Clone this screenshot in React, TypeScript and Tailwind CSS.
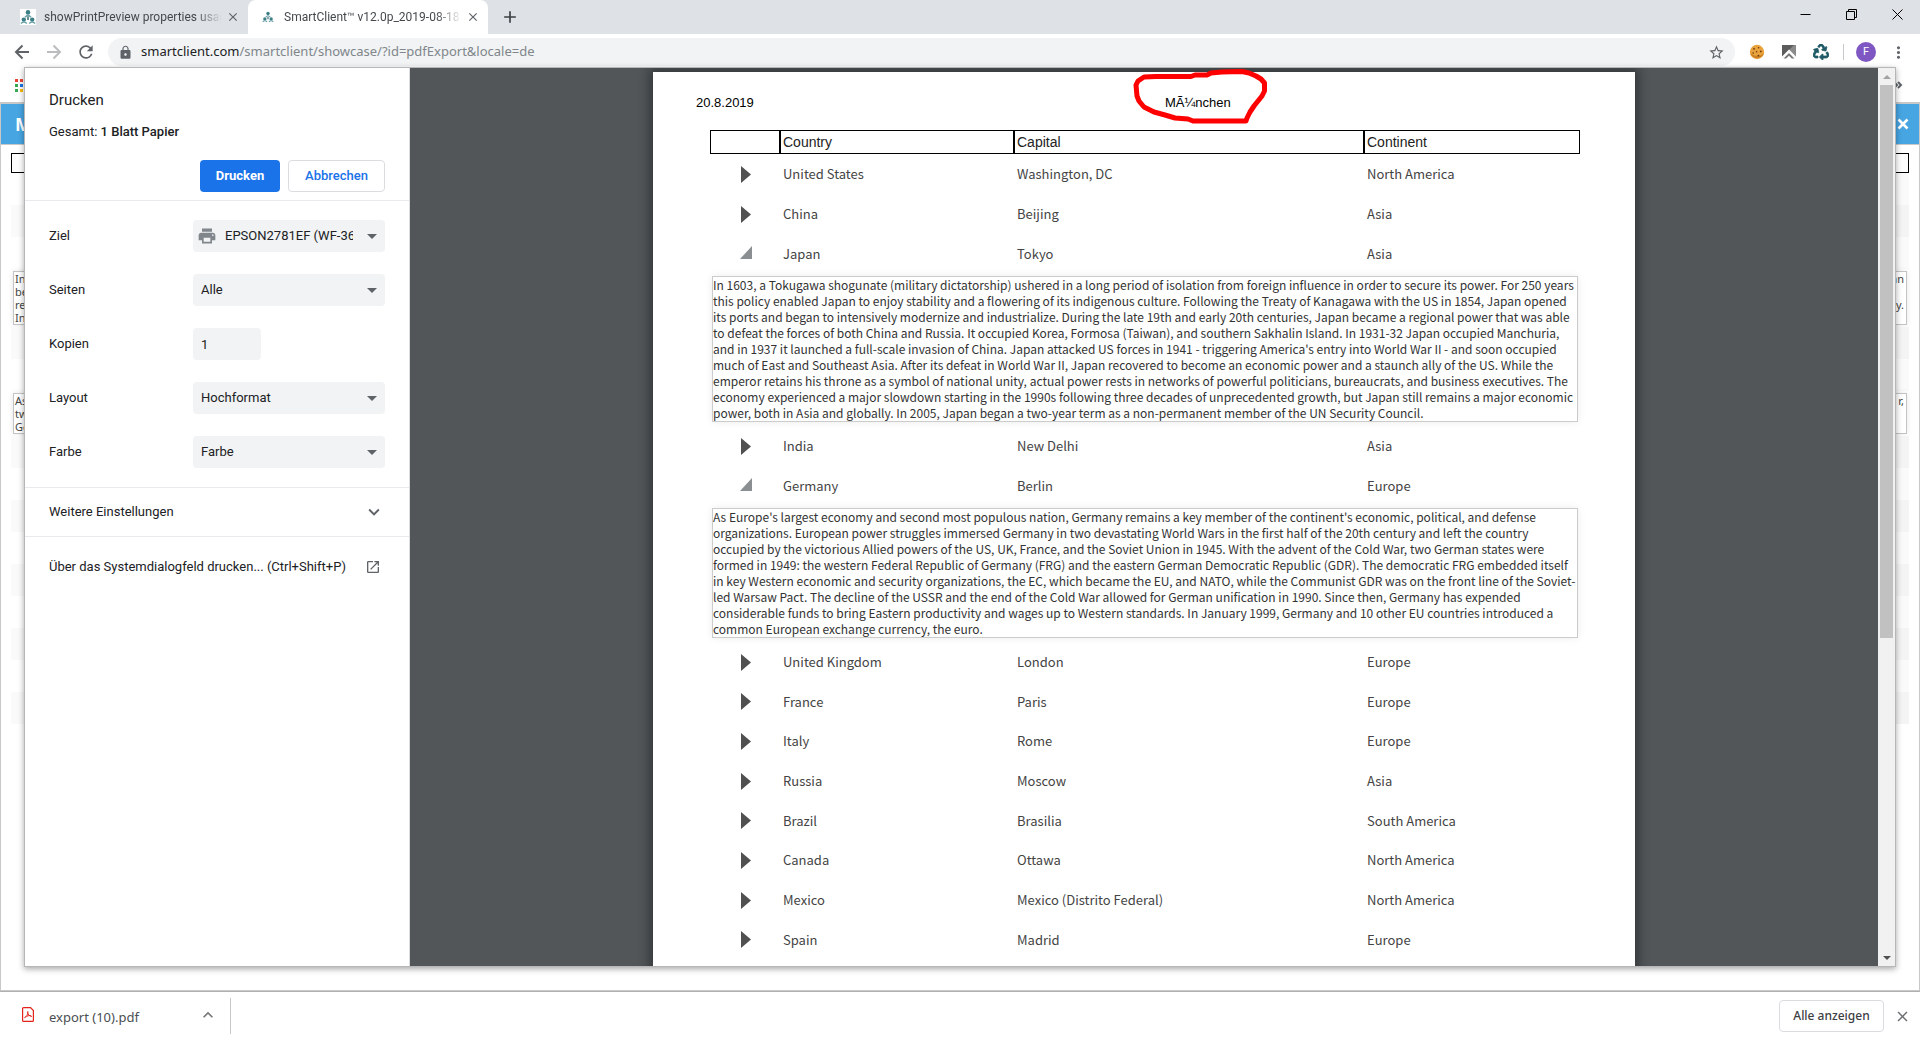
import { useState, type ReactNode } from 'react'
import {
  MdAdd,
  MdClose,
  MdExpandLess,
  MdExpandMore,
  MdLock,
  MdMoreVert,
  MdOpenInNew,
  MdPrint,
  MdRefresh,
  MdStarBorder,
} from 'react-icons/md'
import { FaRecycle } from 'react-icons/fa'

const uiFont = "font-['Noto_Sans','Open_Sans',sans-serif]"
const headFont = "font-['Liberation_Sans',Arial,sans-serif]"

type Country = {
  name: string
  capital: string
  continent: string
  detail?: string
}

const countries: Country[] = [
  { name: 'United States', capital: 'Washington, DC', continent: 'North America' },
  { name: 'China', capital: 'Beijing', continent: 'Asia' },
  {
    name: 'Japan',
    capital: 'Tokyo',
    continent: 'Asia',
    detail: `In 1603, a Tokugawa shogunate (military dictatorship) ushered in a long period of isolation from foreign influence in order to secure its power. For 250 years
this policy enabled Japan to enjoy stability and a flowering of its indigenous culture. Following the Treaty of Kanagawa with the US in 1854, Japan opened
its ports and began to intensively modernize and industrialize. During the late 19th and early 20th centuries, Japan became a regional power that was able
to defeat the forces of both China and Russia. It occupied Korea, Formosa (Taiwan), and southern Sakhalin Island. In 1931-32 Japan occupied Manchuria,
and in 1937 it launched a full-scale invasion of China. Japan attacked US forces in 1941 - triggering America's entry into World War II - and soon occupied
much of East and Southeast Asia. After its defeat in World War II, Japan recovered to become an economic power and a staunch ally of the US. While the
emperor retains his throne as a symbol of national unity, actual power rests in networks of powerful politicians, bureaucrats, and business executives. The
economy experienced a major slowdown starting in the 1990s following three decades of unprecedented growth, but Japan still remains a major economic
power, both in Asia and globally. In 2005, Japan began a two-year term as a non-permanent member of the UN Security Council.`,
  },
  { name: 'India', capital: 'New Delhi', continent: 'Asia' },
  {
    name: 'Germany',
    capital: 'Berlin',
    continent: 'Europe',
    detail: `As Europe's largest economy and second most populous nation, Germany remains a key member of the continent's economic, political, and defense
organizations. European power struggles immersed Germany in two devastating World Wars in the first half of the 20th century and left the country
occupied by the victorious Allied powers of the US, UK, France, and the Soviet Union in 1945. With the advent of the Cold War, two German states were
formed in 1949: the western Federal Republic of Germany (FRG) and the eastern German Democratic Republic (GDR). The democratic FRG embedded itself
in key Western economic and security organizations, the EC, which became the EU, and NATO, while the Communist GDR was on the front line of the Soviet-
led Warsaw Pact. The decline of the USSR and the end of the Cold War allowed for German unification in 1990. Since then, Germany has expended
considerable funds to bring Eastern productivity and wages up to Western standards. In January 1999, Germany and 10 other EU countries introduced a
common European exchange currency, the euro.`,
  },
  { name: 'United Kingdom', capital: 'London', continent: 'Europe' },
  { name: 'France', capital: 'Paris', continent: 'Europe' },
  { name: 'Italy', capital: 'Rome', continent: 'Europe' },
  { name: 'Russia', capital: 'Moscow', continent: 'Asia' },
  { name: 'Brazil', capital: 'Brasilia', continent: 'South America' },
  { name: 'Canada', capital: 'Ottawa', continent: 'North America' },
  { name: 'Mexico', capital: 'Mexico (Distrito Federal)', continent: 'North America' },
  { name: 'Spain', capital: 'Madrid', continent: 'Europe' },
]

function SiteIcon({ className }: { className: string }) {
  return (
    <svg viewBox="0 0 16 16" className={className} aria-hidden>
      <g fill="#3d7f86">
        <circle cx="8" cy="3.4" r="2.3" />
        <circle cx="3.8" cy="10.6" r="2.2" />
        <circle cx="12.2" cy="10.6" r="2.2" />
      </g>
      <g fill="none" stroke="#69a3a8" strokeWidth="1.5">
        <path d="M5 8.2 Q8 4.6 11 8.2" />
        <path d="M1 14.6 Q3.8 11.4 6.8 14.6" />
        <path d="M9.2 14.6 Q12.2 11.4 15 14.6" />
      </g>
      <path d="M8 7.5V11" stroke="#2a5d66" strokeWidth="1.4" />
    </svg>
  )
}

function Tab({ title, active }: { title: string; active?: boolean }) {
  return (
    <div
      className={`flex w-60 shrink-0 items-center ${active ? 'rounded-t-lg bg-white pl-3.5' : 'pl-3'}`}
    >
      {active ? (
        <SiteIcon className="mr-2.5 size-3 shrink-0" />
      ) : (
        <SiteIcon className="mr-2 size-4 shrink-0 bg-white" />
      )}
      <span className="min-w-0 flex-1 font-[Roboto,sans-serif] text-[12px] whitespace-nowrap text-[#45494d] [mask-image:linear-gradient(to_right,#000_85%,transparent)]">
        {title}
      </span>
      <button
        type="button"
        aria-label="Tab schließen"
        className="flex w-[26px] shrink-0 justify-center pr-1"
      >
        <MdClose size={14} className="text-[#5f6368]" />
      </button>
    </div>
  )
}

function WindowButton({ label, children }: { label: string; children: ReactNode }) {
  return (
    <button type="button" aria-label={label} className="flex h-7 w-[46px] items-center justify-center">
      <svg viewBox="0 0 11 11" className="size-[11px]" fill="none" stroke="#000">
        {children}
      </svg>
    </button>
  )
}

function TabStrip() {
  return (
    <header className="flex h-[34px] shrink-0 items-stretch bg-[#dee1e6] pl-2">
      <Tab title="showPrintPreview properties usag" />
      <Tab title="SmartClient™ v12.0p_2019-08-18" active />
      <button type="button" aria-label="Neuer Tab" className="flex w-11 items-center justify-center">
        <MdAdd size={20} className="text-[#3c4043]" />
      </button>
      <div className="ml-auto flex">
        <WindowButton label="Minimieren">
          <path d="M0.5 5.5H10.5" />
        </WindowButton>
        <WindowButton label="Verkleinern">
          <path d="M0.5 2.5H8.5V10.5H0.5Z M2.5 2.5V0.5H10.5V8.5H8.5" />
        </WindowButton>
        <WindowButton label="Schließen">
          <path d="M0.5 0.5L10.5 10.5M10.5 0.5L0.5 10.5" />
        </WindowButton>
      </div>
    </header>
  )
}

function NavArrow({ className }: { className: string }) {
  return (
    <svg
      viewBox="0 0 20 20"
      className={`size-5 ${className}`}
      fill="none"
      stroke="currentColor"
      strokeWidth="2"
      aria-hidden
    >
      <path d="M17 10H4.500M10.500 3.500L4 10L10.500 16.500" />
    </svg>
  )
}

function Toolbar() {
  return (
    <div className="flex h-[34px] shrink-0 items-center bg-white pt-0.5 pl-1.5">
      <button type="button" aria-label="Zurück" className="flex w-8 justify-center">
        <NavArrow className="text-[#5f6368]" />
      </button>
      <button type="button" aria-label="Vorwärts" className="flex w-8 justify-center">
        <NavArrow className="rotate-180 text-[#babcbe]" />
      </button>
      <button type="button" aria-label="Neu laden" className="mr-1.5 flex w-8 justify-center">
        <MdRefresh size={20} className="text-[#5f6368]" />
      </button>
      <div className="flex h-7 flex-1 items-center rounded-full bg-[#f1f3f4] px-2.5">
        <MdLock size={15} className="text-[#5f6368]" />
        <a
          href="https://smartclient.com/smartclient/showcase/?id=pdfExport&locale=de"
          className={`ml-2 flex-1 text-[13px] text-[#80868b] ${uiFont}`}
        >
          <span className="text-[#202124]">smartclient.com</span>
          /smartclient/showcase/?id=pdfExport&amp;locale=de
        </a>
        <button type="button" aria-label="Lesezeichen">
          <MdStarBorder size={17} className="text-[#5f6368]" />
        </button>
      </div>
      <div className="flex items-center pl-3.5">
        <svg viewBox="0 0 16 16" className="size-4" aria-hidden>
          <circle cx="8" cy="8" r="7.2" fill="#e8a33d" />
          <path d="M1.5 9.5A7.2 7.2 0 0 0 14.8 9.5 Q9 14.5 1.5 9.5" fill="#c97f22" />
          <g fill="#6b3510">
            <circle cx="5" cy="4.8" r="0.9" />
            <circle cx="9.6" cy="3.8" r="0.8" />
            <circle cx="11.8" cy="7.4" r="0.9" />
            <circle cx="7.6" cy="7.8" r="0.8" />
            <circle cx="4.2" cy="9" r="0.8" />
            <circle cx="9.4" cy="11.6" r="0.9" />
          </g>
        </svg>
        <svg viewBox="0 0 16 16" className="ml-4 size-4" aria-hidden>
          <path d="M1 1H15V14L8 7L1 14Z" fill="#8a8a8a" />
          <path d="M1 1H13L1 13Z" fill="#5c5c5c" />
          <path d="M2.500 14.500L8 9L13.500 14.500H10.800L8 11.800L5.200 14.500Z" fill="#777" />
          <path d="M1 13.500L8 6.500L15 13.500" fill="none" stroke="#fff" strokeWidth="1.300" />
        </svg>
        <FaRecycle size={16} stroke="currentColor" strokeWidth={24} className="ml-4 text-[#1f5a66]" />
        <span className="ml-3.5 h-4 w-px bg-[#c6c9cc]" />
        <button
          type="button"
          aria-label="Profil"
          className="ml-3 size-5 rounded-full bg-[#7e57c2] font-[Roboto,sans-serif] text-[11px] leading-5 text-white"
        >
          F
        </button>
        <button type="button" aria-label="Menü" className="flex w-11 justify-center">
          <MdMoreVert size={19} className="text-[#5f6368]" />
        </button>
      </div>
    </div>
  )
}

function BookmarksBar() {
  const dots = ['#ea4335', '#ea4335', '#34a853', '#1a73e8', '#34a853', '#fbbc04']
  return (
    <div className="flex h-[34px] items-center justify-between bg-white pr-4 pl-[15px]">
      <svg viewBox="0 0 8 13" className="h-[13px] w-2" aria-hidden>
        {dots.map((fill, i) => (
          <rect key={i} x={(i % 2) * 5} y={Math.floor(i / 2) * 5} width="3" height="3" fill={fill} />
        ))}
      </svg>
      <svg viewBox="0 0 14 10" className="h-2.5 w-3.5" fill="none" stroke="#5f6368" strokeWidth="2" aria-hidden>
        <path d="M4 2L7 5L4 8M8 2L11 5L8 8" />
      </svg>
    </div>
  )
}

function SnippetBox({ lines }: { lines: [string, string][] }) {
  return (
    <div className="p-0.5">
      <div
        className={`border border-[#c4c4c4] bg-white pr-0.5 pl-px text-[11px] leading-[13px] text-[#444] shadow-[0_0_6px_rgba(0,0,0,0.1)] ${uiFont}`}
      >
        {lines.map(([start, end], i) => (
          <div key={i} className="flex h-[13px] justify-between">
            <span>{start}</span>
            <span>{end}</span>
          </div>
        ))}
      </div>
    </div>
  )
}

function BackRow({ odd }: { odd?: boolean }) {
  return (
    <div
      className={`h-8 ${odd ? 'bg-linear-to-r from-[#fafafa] to-[#f4f4f4]' : 'bg-linear-to-r from-white to-[#fafafa]'}`}
    />
  )
}

// showcase window that sits behind the print dialog
function ShowcasePage() {
  return (
    <div className="flex-1 border-x border-t-2 border-b border-[#c8c8c8] bg-white">
      <div className="flex h-10 items-center justify-between bg-[#47a5e2] pr-2.5 pl-3.5">
        <h1 className={`text-[18px] font-bold text-white ${uiFont}`}>M</h1>
        <button type="button" aria-label="Fenster schließen">
          <svg viewBox="0 0 12 12" className="size-3" stroke="#fff" strokeWidth="2.6" aria-hidden>
            <path d="M1.5 1.5L10.5 10.5M10.5 1.5L1.5 10.5" />
          </svg>
        </button>
      </div>
      <div className="border-t border-[#c8c8c8] px-2.5 pt-2">
        <div className="h-5 border border-black bg-white" />
        <BackRow />
        <BackRow odd />
        <BackRow />
        <SnippetBox lines={[['In', 'an'], ['be', ''], ['re', 'y.'], ['In', '']]} />
        <BackRow odd />
        <BackRow />
        <SnippetBox lines={[['As', 'r,'], ['tw', ''], ['Ge', '']]} />
        {[true, false, true, false, true, false, true, false, true].map((odd, i) => (
          <BackRow key={i} odd={odd} />
        ))}
      </div>
    </div>
  )
}

const fieldCls = 'h-8 rounded bg-[#f1f3f4] text-[13px] text-[#202124] outline-none'

function Field({ id, label, children }: { id: string; label: string; children: ReactNode }) {
  return (
    <div className="flex items-center justify-between">
      <label htmlFor={id}>{label}</label>
      <div className="w-48">{children}</div>
    </div>
  )
}

function SelectField({ id, label, value, icon }: { id: string; label: string; value: string; icon?: boolean }) {
  return (
    <Field id={id} label={label}>
      <div className="relative">
        <select
          id={id}
          className={`w-full appearance-none pr-8 ${icon ? 'pl-8' : 'pl-2'} ${fieldCls}`}
        >
          <option>{value}</option>
        </select>
        {icon && <MdPrint size={20} className="absolute top-1.5 left-1 text-[#80868b]" />}
        <svg viewBox="0 0 10 5" className="absolute top-3.5 right-2 h-[5px] w-2.5" fill="#5f6368" aria-hidden>
          <path d="M0 0H10L5 5Z" />
        </svg>
      </div>
    </Field>
  )
}

function PrintSettings({ onClose }: { onClose: () => void }) {
  const [copies, setCopies] = useState('1')
  return (
    <aside className="w-[385px] shrink-0 border-r border-[#dadce0] bg-white font-[Roboto,sans-serif] text-[13px] leading-5 text-[#202124]">
      <div className="border-b border-[#e8eaed] px-6 pt-5.5 pb-2">
        <h2 className="text-[15px] leading-5">Drucken</h2>
        <p className="mt-3">
          Gesamt: <span className="font-medium">1 Blatt Papier</span>
        </p>
        <div className="mt-[18px] flex justify-end gap-2">
          <button type="button" className="h-8 w-20 rounded bg-[#1a73e8] font-bold text-white">
            Drucken
          </button>
          <button
            type="button"
            onClick={onClose}
            className="h-8 w-[97px] rounded border border-[#dadce0] font-medium text-[#1a73e8]"
          >
            Abbrechen
          </button>
        </div>
      </div>
      <form className="flex flex-col gap-[22px] border-b border-[#e8eaed] px-6 py-[19px]">
        <SelectField id="ziel" label="Ziel" value="EPSON2781EF (WF-3620 Series)" icon />
        <SelectField id="seiten" label="Seiten" value="Alle" />
        <Field id="kopien" label="Kopien">
          <input
            id="kopien"
            value={copies}
            onChange={(e) => setCopies(e.target.value)}
            className={`w-[68px] px-2 ${fieldCls}`}
          />
        </Field>
        <SelectField id="layout" label="Layout" value="Hochformat" />
        <SelectField id="farbe" label="Farbe" value="Farbe" />
      </form>
      <button
        type="button"
        className="flex h-[49px] w-full items-center justify-between border-b border-[#e8eaed] px-6"
      >
        Weitere Einstellungen
        <MdExpandMore size={22} className="text-[#5f6368]" />
      </button>
      <button type="button" className="flex h-[60px] w-full items-center justify-between pr-7 pl-6">
        Über das Systemdialogfeld drucken... (Ctrl+Shift+P)
        <MdOpenInNew size={16} className="text-[#5f6368]" />
      </button>
    </aside>
  )
}

function CountryRows({ country }: { country: Country }) {
  return (
    <>
      <tr className="h-10 text-[#444] nth-[3n]:h-[39px]">
        <td className="pl-[30px]">
          {country.detail ? (
            <svg viewBox="0 0 12 17" className="h-[17px] w-3" fill="#8b8f92" aria-hidden>
              <path d="M12 1V14H0Z" />
            </svg>
          ) : (
            <svg viewBox="0 0 12 17" className="h-[17px] w-3" fill="#505050" aria-hidden>
              <path d="M1 0L11 8.5L1 17Z" />
            </svg>
          )}
        </td>
        <td className="px-[3px]">{country.name}</td>
        <td className="px-[3px]">{country.capital}</td>
        <td className="px-[3px]">{country.continent}</td>
      </tr>
      {country.detail && (
        <tr>
          <td colSpan={4} className="px-0.5 pt-[3px] pb-1">
            <div className="border border-[#ccc] text-[12px] leading-4 whitespace-pre text-[#333] shadow-[0_0_8px_rgba(0,0,0,0.08)]">
              {country.detail}
            </div>
          </td>
        </tr>
      )}
    </>
  )
}

function PdfPage() {
  return (
    <div className="relative h-[1390px] w-[982px] shrink-0 bg-white pr-[55px] shadow-[0_0_10px_4px_rgba(0,0,0,0.35)]">
      <div
        className={`grid h-[58px] grid-cols-[469px_1fr] items-center pt-1 pl-[43px] text-[13px] text-black ${headFont}`}
      >
        <span>20.8.2019</span>
        <span>MÃ¼nchen</span>
      </div>
      <div className="pl-[57px]">
        <table className="w-full table-fixed border-separate border-spacing-0 text-left font-['Noto_Sans_CJK_JP','Lato',sans-serif] text-[13px] leading-5">
          <thead className={`text-[14px] text-[#222] ${headFont}`}>
            <tr className="h-6">
              <th className="w-[70px] border border-black" aria-label="Details" />
              <th className="w-[234px] border border-black px-0.5 font-normal">Country</th>
              <th className="w-[350px] border border-black px-0.5 font-normal">Capital</th>
              <th className="border border-black px-0.5 font-normal">Continent</th>
            </tr>
          </thead>
          <tbody>
            {countries.map((c) => (
              <CountryRows key={c.name} country={c} />
            ))}
          </tbody>
        </table>
      </div>
      {/* hand-drawn marker around the broken title */}
      <svg
        viewBox="0 0 140 56"
        className="absolute -top-1 left-[478px] h-14 w-[140px]"
        fill="none"
        stroke="#f00"
        strokeWidth="5"
        strokeLinejoin="round"
        aria-hidden
      >
        <path d="M5 17L7 13L13 9L25 8.5H60L64 7H76L80 5L91 4L111 3.500L118 5L125 8L130 11L133.500 15V23L131 28L123 38L119 44L116 50L115 53H62L57 51L44 50L34 47L23 44L13 39L8 33L6 28Z" />
      </svg>
    </div>
  )
}

function Scrollbar() {
  return (
    <div className="flex w-[17px] shrink-0 flex-col items-center bg-[#f1f1f1]">
      <span className="flex h-[17px] shrink-0 items-center">
        <svg viewBox="0 0 8 4" className="h-1 w-2" fill="#a3a3a3" aria-hidden>
          <path d="M0 4L4 0L8 4Z" />
        </svg>
      </span>
      <span className="h-[61.6%] w-[13px] bg-[#c1c1c1]" />
      <span className="mt-auto flex h-[17px] shrink-0 items-center">
        <svg viewBox="0 0 8 4" className="h-1 w-2" fill="#505050" aria-hidden>
          <path d="M0 0L4 4L8 0Z" />
        </svg>
      </span>
    </div>
  )
}

function DownloadsBar() {
  return (
    <footer className={`flex h-[49px] shrink-0 items-center border-t border-[#b0b0b0] bg-white ${uiFont}`}>
      <div className="flex h-9 w-[231px] items-center border-r border-[#c8c8c8] pl-[22px]">
        <svg viewBox="0 0 12 15" className="mb-1 h-[15px] w-3" fill="none" stroke="#e2231a" aria-hidden>
          <path d="M1.500 0.600H8.500L11.400 3.500V13.500Q11.400 14.400 10.500 14.400H1.500Q0.600 14.400 0.600 13.500V1.500Q0.600 0.600 1.500 0.600Z" strokeWidth="1.200" />
          <path d="M2.600 10.800Q6 8.500 6 5.200Q5.800 3.800 5.400 5.200Q6 8.800 9.600 9.600Q10 8.400 7 8.600Q4 9 2.600 10.800" strokeWidth="0.900" />
        </svg>
        <span className="mt-1 ml-[15px] text-[13px] text-[#4a4e52]">export (10).pdf</span>
        <button type="button" aria-label="Weitere Aktionen" className="mr-3 mb-0.5 ml-auto">
          <MdExpandLess size={20} className="text-[#757575]" />
        </button>
      </div>
      <button
        type="button"
        className="ml-auto h-8 w-[105px] rounded border border-[#dadce0] text-[12px] font-medium text-[#3c4043]"
      >
        Alle anzeigen
      </button>
      <button type="button" aria-label="Leiste schließen" className="flex w-9 justify-center">
        <MdClose size={17} className="text-[#6b6e71]" />
      </button>
    </footer>
  )
}

export default function App() {
  const [printing, setPrinting] = useState(true)

  return (
    <div className="flex h-screen flex-col overflow-hidden bg-white">
      <TabStrip />
      <Toolbar />
      <main className="relative flex min-h-0 flex-1 flex-col">
        <BookmarksBar />
        <ShowcasePage />
        {printing && (
          <div
            role="dialog"
            aria-label="Drucken"
            className="absolute inset-x-6 -top-px bottom-6 flex border border-[#b4b6b8] bg-white shadow-[0_2px_6px_rgba(0,0,0,0.35)]"
          >
            <PrintSettings onClose={() => setPrinting(false)} />
            <div className="flex min-w-0 flex-1 justify-center overflow-hidden bg-[#525659] pt-1">
              <PdfPage />
            </div>
            <Scrollbar />
          </div>
        )}
      </main>
      <DownloadsBar />
    </div>
  )
}
